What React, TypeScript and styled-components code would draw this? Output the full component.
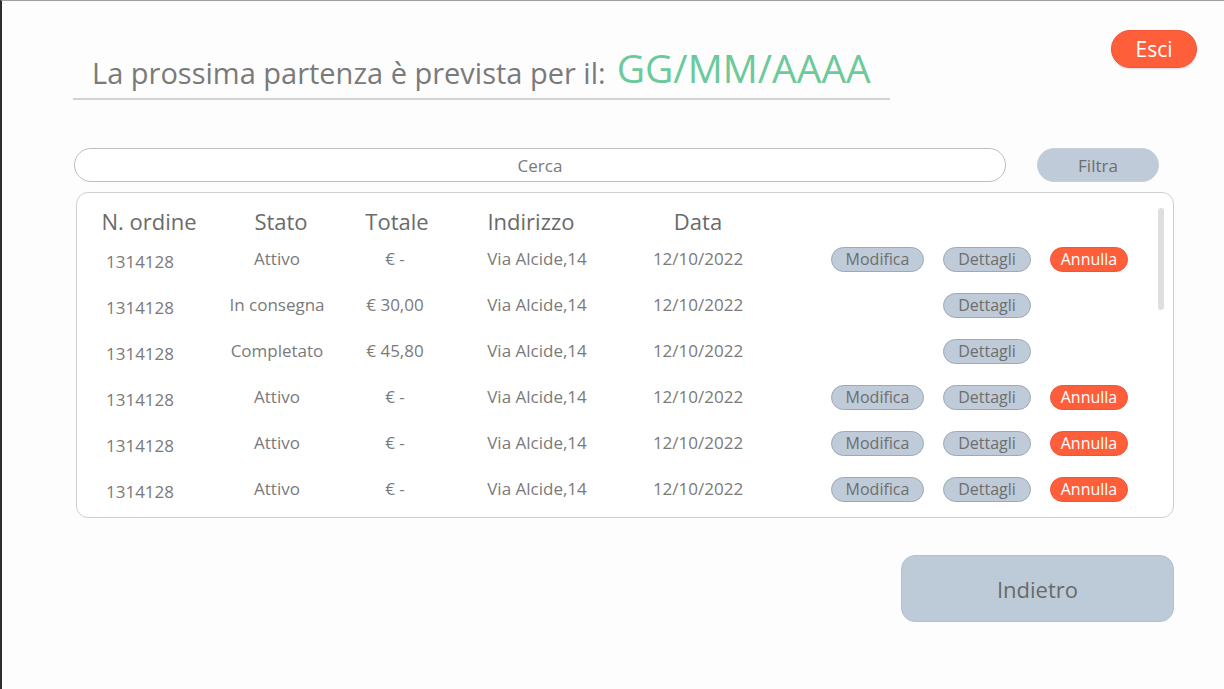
import React from "react";
import styled, { createGlobalStyle } from "styled-components";

const GlobalStyle = createGlobalStyle`
  body {
    margin: 0;
    background: #fdfdfd;
    font-family: "Open Sans", "Noto Sans", sans-serif;
  }
`;

const Page = styled.div`
  height: 689px;
  box-sizing: border-box;
  border-left: 2px solid #2e2e2e;
  border-top: 1px solid #a0a0a0;
  background: #fdfdfd;
  padding: 29px 27px 0 71px;
  overflow: hidden;
`;

const Header = styled.div`
  display: flex;
  justify-content: space-between;
  align-items: flex-start;
`;

const TitleBlock = styled.div`
  width: 817px;
  height: 70px;
  box-sizing: border-box;
  border-bottom: 2px solid #d2d2d2;
  padding: 0 0 11px 19px;
  display: flex;
  align-items: flex-end;
  gap: 11px;
  white-space: nowrap;
`;

const TitleText = styled.span`
  font-size: 29px;
  color: #7a7a7a;
  line-height: 1;
`;

const DateText = styled.span`
  font-size: 39px;
  color: #6cc99a;
  line-height: 1;
`;

const Pill = styled.button<{ $danger?: boolean }>`
  font-family: inherit;
  border-radius: 999px;
  cursor: pointer;
  padding: 0;
  background: ${(p) => (p.$danger ? "#ff5e3a" : "#bfcbd8")};
  color: ${(p) => (p.$danger ? "#ffffff" : "#6e6e6e")};
  border: 1px solid ${(p) => (p.$danger ? "#f0553a" : "#9ea9b5")};
`;

const ExitButton = styled(Pill)`
  width: 86px;
  height: 38px;
  font-size: 21px;
  box-shadow: 0 1px 2px rgba(0, 0, 0, 0.15);
`;

const SearchRow = styled.div`
  display: flex;
  gap: 31px;
  margin-top: 48px;
  padding-left: 1px;
`;

const SearchInput = styled.input`
  width: 932px;
  height: 34px;
  box-sizing: border-box;
  border: 1px solid #bdbdbd;
  border-radius: 17px;
  background: #ffffff;
  text-align: center;
  font-family: inherit;
  font-size: 17px;
  color: #777;
  outline: none;

  &::placeholder {
    color: #7a7a7a;
  }
`;

const FilterButton = styled(Pill)`
  width: 122px;
  height: 34px;
  font-size: 17px;
  border-color: #c6d0dc;
`;

const Panel = styled.div`
  position: relative;
  margin: 10px 0 0 3px;
  width: 1098px;
  height: 326px;
  box-sizing: border-box;
  border: 1px solid #cfcfcf;
  border-radius: 12px;
  background: #ffffff;
  padding: 8px 0 0 14px;
  overflow: hidden;
`;

const Scrollbar = styled.div`
  position: absolute;
  left: 1081px;
  top: 15px;
  width: 6px;
  height: 102px;
  border-radius: 3px;
  background: #dedede;
`;

const Row = styled.div<{ $head?: boolean }>`
  display: grid;
  grid-template-columns: 116px 148px 84px 196px 126px 1fr;
  align-items: center;
  height: ${(p) => (p.$head ? "40px" : "46px")};
  margin-bottom: ${(p) => (p.$head ? "-6px" : "0")};
  color: ${(p) => (p.$head ? "#6a6a6a" : "#7a7a7a")};
  font-size: ${(p) => (p.$head ? "22px" : "17px")};
`;

const Cell = styled.div<{ $drop?: number; $shift?: number }>`
  text-align: center;
  white-space: nowrap;
  padding-top: ${(p) => p.$drop ?? 0}px;
  transform: translateX(${(p) => p.$shift ?? 0}px);
`;

const Actions = styled.div`
  display: grid;
  grid-template-columns: 93px 88px 78px;
  column-gap: 19px;
  padding-left: 70px;
  padding-top: 2px;
  align-items: center;
`;

const RowButton = styled(Pill)<{ $col: number }>`
  grid-column: ${(p) => p.$col};
  height: 25px;
  font-size: 16px;
  line-height: 1;
`;

const Footer = styled.div`
  display: flex;
  justify-content: flex-end;
  margin: 37px 23px 0 0;
`;

const BackButton = styled.button`
  width: 273px;
  height: 67px;
  border-radius: 14px;
  border: 1px solid #b4c1cf;
  background: #bdcad8;
  font-family: inherit;
  font-size: 22px;
  color: #6a6a6a;
  cursor: pointer;
`;

type Order = {
  id: string;
  stato: string;
  totale: string;
  indirizzo: string;
  data: string;
  editable: boolean;
};

const orders: Order[] = [
  { id: "1314128", stato: "Attivo", totale: "€ -", indirizzo: "Via Alcide,14", data: "12/10/2022", editable: true },
  { id: "1314128", stato: "In consegna", totale: "€ 30,00", indirizzo: "Via Alcide,14", data: "12/10/2022", editable: false },
  { id: "1314128", stato: "Completato", totale: "€ 45,80", indirizzo: "Via Alcide,14", data: "12/10/2022", editable: false },
  { id: "1314128", stato: "Attivo", totale: "€ -", indirizzo: "Via Alcide,14", data: "12/10/2022", editable: true },
  { id: "1314128", stato: "Attivo", totale: "€ -", indirizzo: "Via Alcide,14", data: "12/10/2022", editable: true },
  { id: "1314128", stato: "Attivo", totale: "€ -", indirizzo: "Via Alcide,14", data: "12/10/2022", editable: true },
];

export default function App() {
  return (
    <>
      <GlobalStyle />
      <Page>
        <Header>
          <TitleBlock>
            <TitleText>La prossima partenza è prevista per il:</TitleText>
            <DateText>GG/MM/AAAA</DateText>
          </TitleBlock>
          <ExitButton $danger>Esci</ExitButton>
        </Header>

        <SearchRow>
          <SearchInput placeholder="Cerca" />
          <FilterButton>Filtra</FilterButton>
        </SearchRow>

        <Panel>
          <Row $head>
            <Cell>N. ordine</Cell>
            <Cell>Stato</Cell>
            <Cell>Totale</Cell>
            <Cell $shift={-6}>Indirizzo</Cell>
            <Cell>Data</Cell>
          </Row>
          {orders.map((o, i) => (
            <Row key={i}>
              <Cell $drop={7} $shift={-9}>
                {o.id}
              </Cell>
              <Cell $shift={-4}>{o.stato}</Cell>
              <Cell $shift={-2}>{o.totale}</Cell>
              <Cell>{o.indirizzo}</Cell>
              <Cell>{o.data}</Cell>
              <Actions>
                {o.editable && <RowButton $col={1}>Modifica</RowButton>}
                <RowButton $col={2}>Dettagli</RowButton>
                {o.editable && (
                  <RowButton $col={3} $danger>
                    Annulla
                  </RowButton>
                )}
              </Actions>
            </Row>
          ))}
          <Scrollbar />
        </Panel>

        <Footer>
          <BackButton>Indietro</BackButton>
        </Footer>
      </Page>
    </>
  );
}
